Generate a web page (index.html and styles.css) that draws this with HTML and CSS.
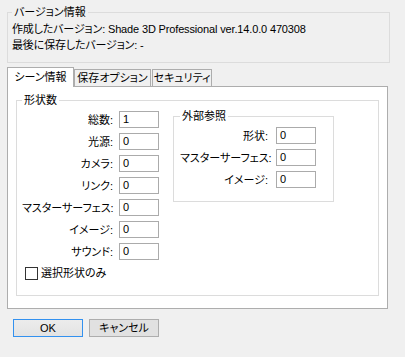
FILE: index.html
```html
<!DOCTYPE html>
<html lang="ja">
<head>
<meta charset="utf-8">
<link rel="stylesheet" href="styles.css">
</head>
<body>
<div class="dialog">
  <fieldset class="group version">
    <legend>バージョン情報</legend>
    <div class="line">作成したバージョン: Shade 3D Professional ver.14.0.0 470308</div>
    <div class="line">最後に保存したバージョン: -</div>
  </fieldset>
  <div class="tabs">
    <div class="tab active t1">シーン情報</div>
    <div class="tab t2">保存オプション</div>
    <div class="tab t3">セキュリティ</div>
  </div>
  <div class="panel">
    <fieldset class="group shapes">
      <legend>形状数</legend>
      <div class="cols">
        <div class="leftcol">
          <div class="form">
            <span class="lbl">総数:</span><span class="field">1</span>
            <span class="lbl">光源:</span><span class="field">0</span>
            <span class="lbl">カメラ:</span><span class="field">0</span>
            <span class="lbl">リンク:</span><span class="field">0</span>
            <span class="lbl">マスターサーフェス:</span><span class="field">0</span>
            <span class="lbl">イメージ:</span><span class="field">0</span>
            <span class="lbl">サウンド:</span><span class="field">0</span>
          </div>
          <div class="check"><span class="box"></span><span>選択形状のみ</span></div>
        </div>
        <fieldset class="group ext">
          <legend>外部参照</legend>
          <div class="form ext-form">
            <span class="lbl">形状:</span><span class="field">0</span>
            <span class="lbl">マスターサーフェス:</span><span class="field">0</span>
            <span class="lbl">イメージ:</span><span class="field">0</span>
          </div>
        </fieldset>
      </div>
    </fieldset>
  </div>
  <div class="buttons">
    <button class="btn default">OK</button>
    <button class="btn">キャンセル</button>
  </div>
</div>
</body>
</html>
```
FILE: styles.css
```css
* { box-sizing: border-box; }
html, body { margin: 0; padding: 0; }
body {
  background: #f0f0f0;
  width: 405px;
  height: 357px;
  overflow: hidden;
  font-family: "Liberation Sans", "Noto Sans CJK JP", sans-serif;
  font-size: 11px;
  line-height: 14px;
  color: #000;
  font-feature-settings: "palt";
}
.dialog { padding: 5px 0 0 7px; }

.group {
  border: 1px solid #dcdcdc;
  margin: 0;
  min-width: 0;
}
.group legend {
  padding: 0 2px;
  line-height: 14px;
}

.version {
  width: 383px;
  padding: 2px 4px 9px 4px;
}
.version .line {
  line-height: 16px;
  letter-spacing: -0.15px;
}

.tabs {
  display: flex;
  align-items: flex-end;
  height: 19px;
  margin-top: 4px;
}
.tab {
  border: 1px solid #adadad;
  border-bottom: none;
  background: #f0f0f0;
  text-align: center;
  white-space: nowrap;
  height: 17px;
  padding-top: 1px;
  line-height: 14px;
}
.tab.active {
  background: #fff;
  height: 20px;
  margin-bottom: -1px;
  padding-top: 2px;
  position: relative;
  z-index: 1;
}
.t1 { width: 67px; }
.t2 { width: 77px; }
.t3 { width: 60px; margin-left: 1px; }

.panel {
  width: 381px;
  border: 1px solid #adadad;
  background: #fff;
}
.shapes {
  margin: 6px 8px 12px 8px;
  padding: 2px 5px 15px 5px;
}
.cols {
  display: flex;
  align-items: flex-start;
}
.leftcol { padding-top: 2px; }
.form {
  display: grid;
  grid-template-columns: 91px 40px;
  column-gap: 6px;
  row-gap: 5px;
}
.lbl {
  text-align: right;
  align-self: center;
  white-space: nowrap;
}
.field {
  height: 17px;
  border: 1px solid #ababab;
  background: #fff;
  padding-left: 3px;
  line-height: 15px;
}
.check {
  display: flex;
  align-items: center;
  height: 14px;
  margin-top: 6px;
  margin-left: 3px;
  gap: 3px;
}
.box {
  width: 13px;
  height: 13px;
  border: 1px solid #333;
  background: #fff;
}
.ext {
  width: 161px;
  margin-left: 14px;
  padding: 4px 17px 13px 6px;
}
.ext-form {
  grid-template-columns: 88px 40px;
  column-gap: 8px;
}

.buttons {
  display: flex;
  gap: 6px;
  margin-top: 10px;
  padding-left: 6px;
}
.btn {
  width: 70px;
  height: 18px;
  padding: 0;
  margin: 0;
  font-family: inherit;
  font-size: 11px;
  line-height: 14px;
  color: #000;
  background: #e1e1e1;
  border: 1px solid #adadad;
  font-feature-settings: "palt";
}
.btn.default {
  border-color: #3391ef;
  background: linear-gradient(#ececec, #e3e3e3);
}
```
